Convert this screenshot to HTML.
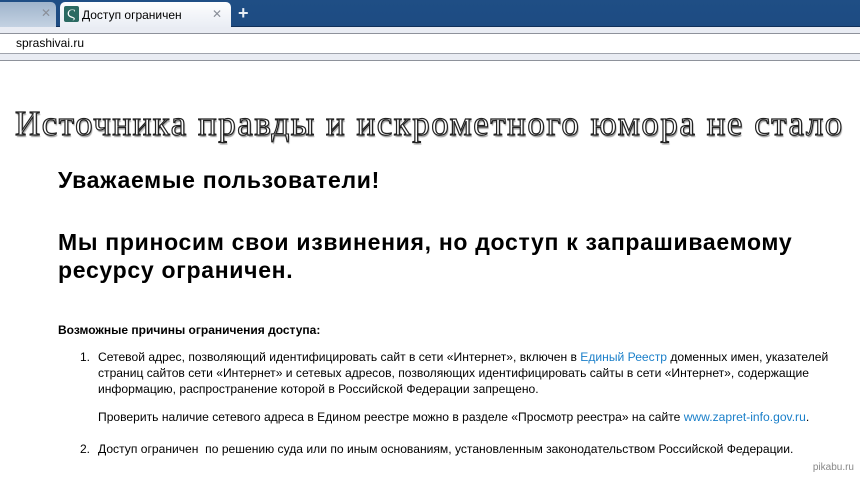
<!DOCTYPE html>
<html><head><meta charset="utf-8">
<style>
*{margin:0;padding:0;box-sizing:border-box}
html,body{width:860px;height:479px;overflow:hidden;background:#fff;font-family:"Liberation Sans","DejaVu Sans",sans-serif}
.tabbar{position:absolute;left:0;top:0;width:860px;height:27px;background:linear-gradient(#1f4e85,#1d4b82);border-bottom:1px solid #10305a}
.tab1{position:absolute;left:-10px;top:2px;width:66px;height:25px;background:linear-gradient(#9fb4cc,#c4d2e2);border-radius:5px 5px 0 0}
.tab2{position:absolute;left:60px;top:2px;width:171px;height:26px;background:linear-gradient(#fdfdfe,#e9edf4);border-radius:5px 5px 0 0;font-size:12px;color:#000}
.x{position:absolute;font-size:12px;color:#8a8f99;font-weight:bold}
.ico{position:absolute;left:4px;top:4px;width:15px;height:16px;background:#2b6a62;border-radius:2px;color:#fff;font-size:13px;line-height:16px;text-align:center;font-family:"Liberation Serif",serif}
.plus{position:absolute;left:238px;top:3px;color:#e8eef6;font-size:18px;font-weight:bold}
.tool{position:absolute;left:0;top:27px;width:860px;height:34px;background:#e9ecf3}
.url{position:absolute;left:-2px;top:33px;width:864px;height:21px;background:#fff;border-top:1px solid #8e929b;border-bottom:1px solid #a0a4ad;font-size:12px;line-height:19px;padding-left:18px}
.sep{position:absolute;left:0;top:60px;width:860px;height:1px;background:#8e929b}
.title{position:absolute;left:15px;top:104px;white-space:nowrap;font-family:"Liberation Serif",serif;font-size:35px;color:#fff;-webkit-text-stroke:1.2px #222;text-shadow:1px 2px 1px #999;letter-spacing:1.5px}
h1{position:absolute;left:58px;font-size:23px;font-weight:bold;color:#000;line-height:28px;letter-spacing:0.7px;white-space:nowrap}
.small{position:absolute;left:58px;top:323px;font-size:12px;font-weight:bold}
.li{position:absolute;left:98px;font-size:12.1px;line-height:16px;color:#000;width:748px}
.num{position:absolute;left:80px;font-size:12px;line-height:16px}
a{color:#1a7fc9;text-decoration:none}
.pk{position:absolute;right:6px;top:462px;font-size:10px;color:#888}
</style></head><body>
<div class="tabbar">
<div class="tab1"><span class="x" style="left:51px;top:4px">✕</span></div>
<div class="tab2"><div class="ico">Ϛ</div><span style="position:absolute;left:22px;top:6px">Доступ ограничен</span><span class="x" style="left:152px;top:5px">✕</span></div>
<div class="plus">+</div>
</div>
<div class="tool"></div>
<div class="url">sprashivai.ru</div>
<div class="sep"></div>
<div class="title">Источника правды и искрометного юмора не стало</div>
<h1 style="top:166px">Уважаемые пользователи!</h1>
<h1 style="top:228px">Мы приносим свои извинения, но доступ к запрашиваемому<br>ресурсу ограничен.</h1>
<div class="small">Возможные причины ограничения доступа:</div>
<div class="num" style="top:349px">1.</div>
<div class="li" style="top:349px">Сетевой адрес, позволяющий идентифицировать сайт в сети «Интернет», включен в <a>Единый Реестр</a> доменных имен, указателей страниц сайтов сети «Интернет» и сетевых адресов, позволяющих идентифицировать сайты в сети «Интернет», содержащие информацию, распространение которой в Российской Федерации запрещено.</div>
<div class="li" style="top:409px">Проверить наличие сетевого адреса в Едином реестре можно в разделе «Просмотр реестра» на сайте <a>www.zapret-info.gov.ru</a>.</div>
<div class="num" style="top:441px">2.</div>
<div class="li" style="top:441px">Доступ ограничен&nbsp; по решению суда или по иным основаниям, установленным законодательством Российской Федерации.</div>
<div class="pk">pikabu.ru</div>
</body></html>
